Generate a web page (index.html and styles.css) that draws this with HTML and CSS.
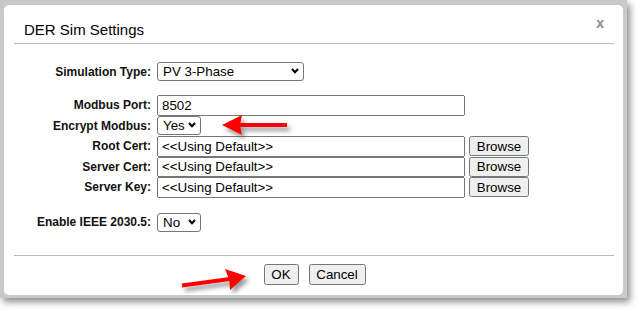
FILE: index.html
```html
<!DOCTYPE html>
<html>

<head>
    <meta name="viewport" content="width=device-width, initial-scale=1">
    <link rel="stylesheet" href="styles.css">
</head>

<body>

<div class="frame">
    <div class="dialog">
        <div class="header">
            <span class="title">DER Sim Settings</span>
            <span class="close">x</span>
        </div>

        <form class="settings" onsubmit="return false;">
            <div class="row row-first">
                <label class="lbl" for="simtype">Simulation Type:</label>
                <span class="selwrap">
                    <select id="simtype" class="sel-wide">
                        <option>PV 3-Phase</option>
                        <option>PV Single Phase</option>
                        <option>Battery</option>
                    </select>
                    <svg class="chev" width="8" height="6" viewBox="0 0 8 6"><path d="M1 1 L4 4.2 L7 1" fill="none" stroke="#000" stroke-width="2"/></svg>
                </span>
            </div>

            <div class="group">
                <div class="row">
                    <label class="lbl" for="port">Modbus Port:</label>
                    <input type="text" id="port" class="txt" value="8502">
                </div>
                <div class="row">
                    <label class="lbl" for="encrypt">Encrypt Modbus:</label>
                    <span class="selwrap">
                        <select id="encrypt" class="sel-small">
                            <option>Yes</option>
                            <option>No</option>
                        </select>
                        <svg class="chev" width="8" height="6" viewBox="0 0 8 6"><path d="M1 1 L4 4.2 L7 1" fill="none" stroke="#000" stroke-width="2"/></svg>
                    </span>
                </div>
                <div class="row">
                    <label class="lbl" for="rootcert">Root Cert:</label>
                    <input type="text" id="rootcert" class="txt" value="<<Using Default>>">
                    <button type="button" class="browse">Browse</button>
                </div>
                <div class="row">
                    <label class="lbl" for="servercert">Server Cert:</label>
                    <input type="text" id="servercert" class="txt" value="<<Using Default>>">
                    <button type="button" class="browse">Browse</button>
                </div>
                <div class="row">
                    <label class="lbl" for="serverkey">Server Key:</label>
                    <input type="text" id="serverkey" class="txt" value="<<Using Default>>">
                    <button type="button" class="browse">Browse</button>
                </div>
            </div>

            <div class="row row-ieee">
                <label class="lbl" for="ieee">Enable IEEE 2030.5:</label>
                <span class="selwrap">
                    <select id="ieee" class="sel-small">
                        <option>No</option>
                        <option>Yes</option>
                    </select>
                    <svg class="chev" width="8" height="6" viewBox="0 0 8 6"><path d="M1 1 L4 4.2 L7 1" fill="none" stroke="#000" stroke-width="2"/></svg>
                </span>
            </div>
        </form>

        <div class="footer">
            <button type="button" class="btn-ok">OK</button>
            <button type="button" class="btn-cancel">Cancel</button>
        </div>
    </div>
</div>

<!-- annotation arrows drawn on top of the screenshot -->
<svg class="marks" width="642" height="314" viewBox="0 0 642 314">
    <defs>
        <filter id="shade" x="-20%" y="-50%" width="150%" height="220%">
            <feDropShadow dx="3" dy="4" stdDeviation="2" flood-color="#555" flood-opacity="0.6"/>
        </filter>
    </defs>
    <g filter="url(#shade)" fill="#ff0000" stroke="#ff0000">
        <line x1="287" y1="125" x2="238" y2="125" stroke-width="4"/>
        <polygon points="222,125 242,115 240,125 242,135" stroke="none"/>
    </g>
    <g filter="url(#shade)" fill="#ff0000" stroke="#ff0000">
        <line x1="182" y1="285.5" x2="230" y2="279" stroke-width="4"/>
        <polygon points="246,276 225,269 229,279 230,290" stroke="none"/>
    </g>
</svg>

</body>
</html>
```

FILE: styles.css
```css
body {
    margin: 0;
    background: #ffffff;
    font-family: Arial, "Liberation Sans", Helvetica, sans-serif;
    position: relative;
    width: 642px;
    height: 314px;
    overflow: hidden;
}

.frame {
    width: 623px;
    height: 293px;
    padding: 5px 0 0 4px;
    background: #c9c9c9;
    box-shadow: 3px 4px 7px rgba(0, 0, 0, 0.45);
}

.dialog {
    width: 619px;
    height: 290px;
    background: #fff;
    border-radius: 5px;
    padding: 0 9px 0 10px;
    box-sizing: border-box;
}

.header {
    height: 39px;
    border-bottom: 1px solid #bdbdbd;
    box-sizing: border-box;
    display: flex;
    justify-content: space-between;
    align-items: flex-start;
    padding: 0 10px;
}

.title {
    font-size: 15px;
    line-height: 17px;
    margin-top: 16px;
    color: #000;
}

.close {
    font-size: 14px;
    font-weight: bold;
    line-height: 16px;
    margin-top: 10px;
    color: #8a8a8a;
}

.settings {
    margin: 0;
    height: 211px;
    padding-top: 18px;
    box-sizing: border-box;
}

.row {
    display: flex;
    align-items: center;
    height: 20.5px;
}

.row-first {
    height: 19px;
}

.group {
    margin-top: 14px;
}

.row-ieee {
    height: 19px;
    margin-top: 15px;
}

.lbl {
    width: 137px;
    margin-right: 6px;
    text-align: right;
    font-size: 12px;
    font-weight: bold;
    color: #111;
}

select, input, button {
    font-family: Arial, "Liberation Sans", sans-serif;
    font-size: 13.33px;
    color: #000;
    box-sizing: border-box;
    margin: 0;
}

.selwrap {
    position: relative;
    display: inline-block;
    height: 19px;
}

select {
    -webkit-appearance: none;
    appearance: none;
    display: block;
    height: 19px;
    padding: 0 0 0 5px;
    border: 1px solid #767676;
    border-radius: 3px;
    background: #fff;
}

.chev {
    position: absolute;
    right: 5px;
    top: 6px;
    pointer-events: none;
}

.sel-wide {
    width: 147px;
}

.sel-small {
    width: 44px;
}

.txt {
    width: 308px;
    height: 20.5px;
    padding: 0 3px;
}

.browse {
    width: 60px;
    height: 20px;
    margin-left: 4px;
    padding: 0;
}

.footer {
    border-top: 1px solid #bdbdbd;
    display: flex;
    justify-content: center;
    gap: 10px;
    padding-top: 8px;
    padding-left: 1px;
}

.footer button {
    height: 21px;
    padding: 0;
}

.btn-ok {
    width: 35px;
}

.btn-cancel {
    width: 57px;
}

.marks {
    position: absolute;
    left: 0;
    top: 0;
    pointer-events: none;
}
```
